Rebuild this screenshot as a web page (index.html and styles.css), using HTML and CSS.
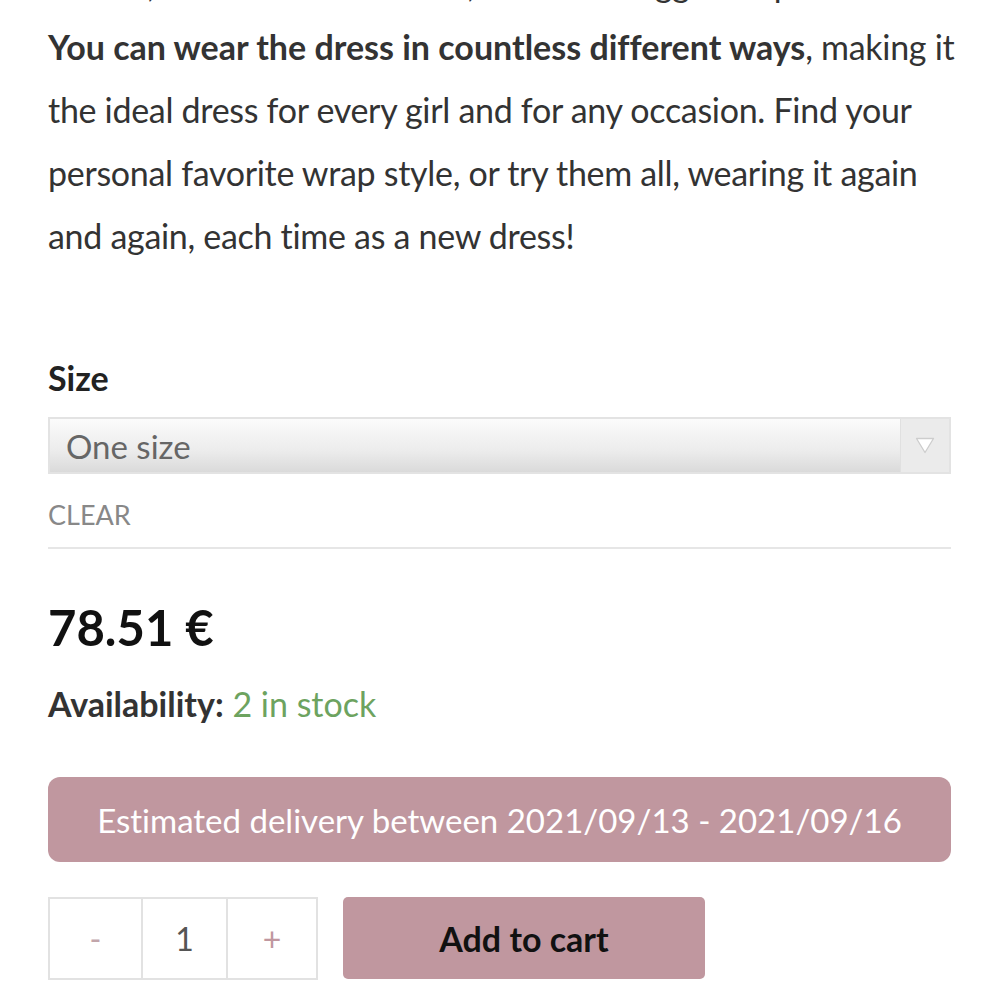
FILE: index.html
```html
<!DOCTYPE html>
<html lang="en">
<head>
<meta charset="utf-8">
<title>Product</title>
<link rel="stylesheet" href="styles.css">
</head>
<body>
<div class="page">
  <div class="desc">
    <p>Classic, soft and comfortable, a little bit bigger drape.<br><strong>You can wear the dress in countless different ways</strong>, making it the ideal dress for every girl and for any occasion. Find your personal favorite wrap style, or try them all, wearing it again and again, each time as a new dress!</p>
  </div>

  <div class="variations">
    <div class="label">Size</div>
    <div class="select">
      <span class="select-value">One size</span>
      <span class="select-arrow">
        <svg width="20" height="17" viewBox="0 0 20 17"><path d="M1.5 1.5 L18.5 1.5 L10 15.5 Z" fill="#fff" stroke="#cdcdcd" stroke-width="1.3" stroke-linejoin="round"/></svg>
      </span>
    </div>
    <div class="clear">Clear</div>
  </div>

  <div class="price">78.51 €</div>
  <div class="availability"><span class="avail-label">Availability:</span> <span class="in-stock">2 in stock</span></div>

  <div class="delivery">Estimated delivery between 2021/09/13 - 2021/09/16</div>

  <div class="cart-row">
    <div class="qty">
      <span class="qty-btn minus">-</span>
      <span class="qty-val">1</span>
      <span class="qty-btn plus">+</span>
    </div>
    <button class="add-to-cart">Add to cart</button>
  </div>
</div>
</body>
</html>
```
FILE: styles.css
```css
html, body {
  margin: 0;
  padding: 0;
  background: #fff;
}
body {
  font-family: Lato, "Open Sans", sans-serif;
  color: #333;
  overflow: hidden;
  font-variant-ligatures: none;
}
.page {
  padding: 0 49px 0 48px;
}
.desc {
  margin-right: -10px;
}
.desc p {
  margin: -48px 0 0 0;
  font-size: 34px;
  line-height: 63px;
  color: #333;
  letter-spacing: -0.3px;
}
.desc strong {
  font-weight: 700;
  letter-spacing: 0;
}
.variations {
  margin-top: 91px;
}
.label {
  font-size: 34px;
  font-weight: 700;
  color: #222;
  line-height: 40px;
}
.select {
  margin-top: 19px;
  height: 53px;
  border: 2px solid #e3e3e3;
  display: flex;
  align-items: stretch;
  background: linear-gradient(to bottom, #fbfbfb 0%, #ececec 60%, #dadada 100%);
}
.select-value {
  flex: 1;
  display: flex;
  align-items: center;
  padding-left: 16px;
  font-size: 33px;
  color: #666;
}
.select-arrow {
  width: 48px;
  display: flex;
  align-items: center;
  justify-content: center;
  background: #ebebeb;
  border-left: 1px solid #e0e0e0;
}
.clear {
  margin-top: 25px;
  text-transform: uppercase;
  font-size: 27px;
  color: #888;
  line-height: 32px;
  padding-bottom: 16px;
  border-bottom: 2px solid #e6e6e6;
}
.price {
  margin-top: 46px;
  font-size: 49px;
  font-weight: 700;
  color: #111;
  line-height: 64px;
}
.availability {
  margin-top: 25px;
  font-size: 34px;
  line-height: 40px;
}
.avail-label {
  font-weight: 700;
  color: #333;
}
.in-stock {
  color: #6da35f;
}
.delivery {
  margin-top: 53px;
  height: 85px;
  border-radius: 12px;
  background: #c0979f;
  color: #fff;
  font-size: 33px;
  display: flex;
  align-items: center;
  justify-content: center;
}
.cart-row {
  margin-top: 35px;
  display: flex;
  gap: 25px;
  align-items: flex-start;
}
.qty {
  display: flex;
  border: 2px solid #e2e2e2;
  height: 79px;
}
.qty-btn, .qty-val {
  display: flex;
  align-items: center;
  justify-content: center;
  font-size: 32px;
}
.minus {
  width: 91px;
  color: #c2a5ab;
  border-right: 2px solid #e2e2e2;
}
.qty-val {
  width: 83px;
  color: #555;
  border-right: 2px solid #e2e2e2;
}
.plus {
  width: 88px;
  color: #c0979f;
}
.add-to-cart {
  width: 362px;
  height: 82px;
  border: none;
  border-radius: 5px;
  background: #c0979f;
  color: #111;
  font-family: Lato, sans-serif;
  font-size: 34px;
  font-weight: 700;
  padding: 0;
}
```
